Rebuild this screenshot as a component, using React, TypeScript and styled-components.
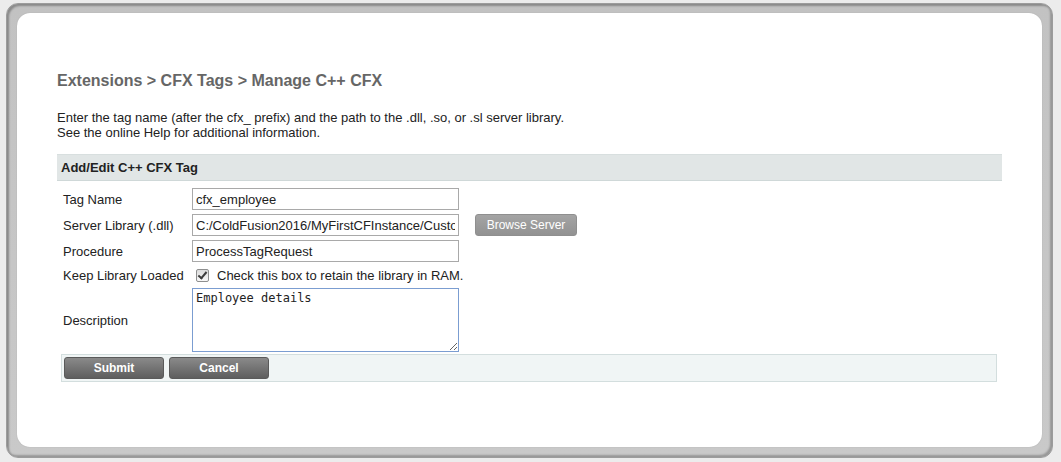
import React from "react";
import styled, { createGlobalStyle } from "styled-components";

const Global = createGlobalStyle`
  html, body { margin: 0; padding: 0; background: #ececec; }
  body { font-family: "Liberation Sans", Arial, sans-serif; }
  * { box-sizing: border-box; }
`;

const Frame = styled.div`
  margin: 3px 8px 0 6px;
  height: 455px;
  padding: 9px 10px 10px 10px;
  border: 1px solid #9c9c9c;
  border-radius: 12px;
  background: linear-gradient(#c2c2c2, #c9c9c9);
  box-shadow: inset 2px 2px 2px #8a8a8a, inset -2px -2px 2px #979797;
  display: flex;
  flex-direction: column;
`;

const Sheet = styled.div`
  flex: 1;
  background: #ffffff;
  border-radius: 13px;
  box-shadow: 0 0 1px #9a9a9a;
  padding: 59px 40px 0 40px;
`;

const Title = styled.h1`
  margin: 0;
  font-size: 16px;
  line-height: 18px;
  font-weight: bold;
  color: #666666;
`;

const Intro = styled.p`
  margin: 20px 0 0 0;
  font-size: 13px;
  line-height: 15px;
  color: #222222;
`;

const SectionBar = styled.div`
  margin-top: 14px;
  height: 27px;
  background: #e1e6e6;
  border-top: 1px solid #d8dfdf;
  border-bottom: 1px solid #cfd8d8;
  padding: 0 4px;
  display: flex;
  align-items: center;
  font-size: 13px;
  font-weight: bold;
  color: #222222;
`;

const FormTable = styled.div`
  margin: 5px 5px 0 4px;
  display: grid;
  grid-template-columns: 131px 1fr;
`;

const Label = styled.div<{ $h: number }>`
  height: ${(p) => p.$h}px;
  display: flex;
  align-items: center;
  padding-left: 2px;
  font-size: 13px;
  color: #222222;
  white-space: nowrap;
`;

const Field = styled.div<{ $h: number }>`
  height: ${(p) => p.$h}px;
  display: flex;
  align-items: center;
  gap: 16px;
`;

const TextInput = styled.input`
  width: 267px;
  height: 22px;
  border: 1px solid #a9a9a9;
  padding: 0 3px;
  font-family: "Liberation Sans", Arial, sans-serif;
  font-size: 13px;
  color: #222222;
  background: #fff;
  outline: none;
`;

const GreyButton = styled.button`
  width: 102px;
  height: 22px;
  border: 1px solid #8f8f8f;
  border-radius: 3px;
  background: linear-gradient(#a4a4a4, #929292);
  color: #ffffff;
  font-family: "Liberation Sans", Arial, sans-serif;
  font-size: 12px;
  padding: 0;
`;

const CheckLine = styled.label`
  display: flex;
  align-items: center;
  gap: 8px;
  padding-left: 4px;
  font-size: 13px;
  color: #222222;
`;

const Check = styled.input`
  appearance: none;
  -webkit-appearance: none;
  position: relative;
  width: 13px;
  height: 13px;
  margin: 0;
  border: 1px solid #8e8f8f;
  border-radius: 2px;
  background: linear-gradient(#dcdcdc, #f8f8f8);
  &:checked::after {
    content: "";
    position: absolute;
    left: 3px;
    top: 0px;
    width: 3px;
    height: 7px;
    border: solid #3c3c3c;
    border-width: 0 2px 2px 0;
    transform: rotate(40deg);
  }
`;

const Memo = styled.textarea`
  width: 267px;
  height: 64px;
  border: 1px solid #7b9dd1;
  padding: 2px 3px;
  font-family: "DejaVu Sans Mono", monospace;
  font-size: 12px;
  color: #222222;
  resize: both;
  outline: none;
`;

const ActionBar = styled.div`
  grid-column: 1 / 3;
  height: 28px;
  background: #f0f5f5;
  border: 1px solid #d3dede;
  padding: 2px;
  display: flex;
  align-items: center;
  gap: 5px;
`;

const DarkButton = styled.button`
  width: 100px;
  height: 22px;
  border: 1px solid #5a5a5a;
  border-radius: 3px;
  background: linear-gradient(#8a8a8a, #5e5e5e);
  color: #ffffff;
  font-family: "Liberation Sans", Arial, sans-serif;
  font-size: 12px;
  font-weight: bold;
  padding: 0;
`;

export default function App() {
  return (
    <>
      <Global />
      <Frame>
        <Sheet>
          <Title>Extensions &gt; CFX Tags &gt; Manage C++ CFX</Title>
          <Intro>
            Enter the tag name (after the cfx_ prefix) and the path to the .dll, .so, or .sl server library.
            <br />
            See the online Help for additional information.
          </Intro>
          <SectionBar>Add/Edit C++ CFX Tag</SectionBar>
          <FormTable>
            <Label $h={26}>Tag Name</Label>
            <Field $h={26}>
              <TextInput defaultValue="cfx_employee" />
            </Field>
            <Label $h={26}>Server Library (.dll)</Label>
            <Field $h={26}>
              <TextInput defaultValue="C:/ColdFusion2016/MyFirstCFInstance/CustomTags/employee.dll" />
              <GreyButton>Browse Server</GreyButton>
            </Field>
            <Label $h={26}>Procedure</Label>
            <Field $h={26}>
              <TextInput defaultValue="ProcessTagRequest" />
            </Field>
            <Label $h={22}>Keep Library Loaded</Label>
            <Field $h={22}>
              <CheckLine>
                <Check type="checkbox" defaultChecked />
                Check this box to retain the library in RAM.
              </CheckLine>
            </Field>
            <Label $h={68}>Description</Label>
            <Field $h={68}>
              <Memo defaultValue="Employee details" />
            </Field>
            <ActionBar>
              <DarkButton>Submit</DarkButton>
              <DarkButton>Cancel</DarkButton>
            </ActionBar>
          </FormTable>
        </Sheet>
      </Frame>
    </>
  );
}
